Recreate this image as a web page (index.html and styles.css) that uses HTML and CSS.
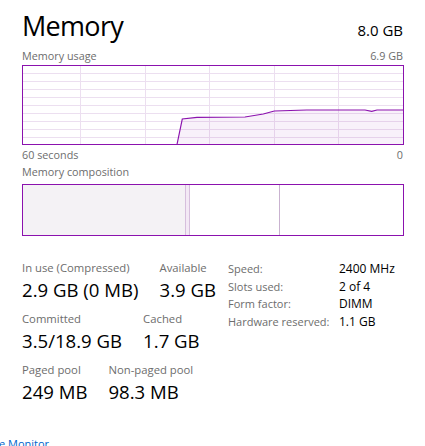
FILE: index.html
```html
<!DOCTYPE html>
<html>
<head>
<meta charset="utf-8">
<link rel="stylesheet" href="styles.css">
</head>
<body>
<div class="page">
  <div class="head">
    <span class="title">Memory</span>
    <span class="total">8.0 GB</span>
  </div>
  <div class="cap cap-usage"><span>Memory usage</span><span>6.9 GB</span></div>
  <svg class="chart" width="382" height="80" viewBox="0 0 382 80">
    <g stroke="#ecdff0" stroke-width="1">
      <line x1="0" y1="8.5" x2="382" y2="8.5"/>
      <line x1="0" y1="16.5" x2="382" y2="16.5"/>
      <line x1="0" y1="24.5" x2="382" y2="24.5"/>
      <line x1="0" y1="32.5" x2="382" y2="32.5"/>
      <line x1="0" y1="40.5" x2="382" y2="40.5"/>
      <line x1="0" y1="48.5" x2="382" y2="48.5"/>
      <line x1="0" y1="56.5" x2="382" y2="56.5"/>
      <line x1="0" y1="64.5" x2="382" y2="64.5"/>
      <line x1="0" y1="72.5" x2="382" y2="72.5"/>
      <line x1="58.5" y1="0" x2="58.5" y2="80"/>
      <line x1="123.5" y1="0" x2="123.5" y2="80"/>
      <line x1="187.5" y1="0" x2="187.5" y2="80"/>
      <line x1="252.5" y1="0" x2="252.5" y2="80"/>
      <line x1="316.5" y1="0" x2="316.5" y2="80"/>
    </g>
    <path d="M155 79.5 L160.3 54 L175 52.3 L223 52 L241.3 49 L252.3 46 L284.7 45 L343 45 L349.7 46.3 L355 45 L381.5 45 L381.5 79.5 Z" fill="#8b12ae" fill-opacity="0.06" stroke="none"/>
    <path d="M155 79.5 L160.3 54 L175 52.3 L223 52 L241.3 49 L252.3 46 L284.7 45 L343 45 L349.7 46.3 L355 45 L381.5 45" fill="none" stroke="#8b12ae" stroke-width="1.2"/>
    <rect x="0.5" y="0.5" width="381" height="79" fill="none" stroke="#8b12ae" stroke-width="1"/>
  </svg>
  <div class="cap cap-axis"><span>60 seconds</span><span>0</span></div>
  <div class="cap cap-comp"><span>Memory composition</span></div>
  <svg class="comp" width="382" height="52" viewBox="0 0 382 52">
    <rect x="0" y="0" width="163.5" height="52" fill="#f4f2f5"/>
    <rect x="163.5" y="0" width="4" height="52" fill="#f3e9f5"/>
    <line x1="163.5" y1="0" x2="163.5" y2="52" stroke="#d6bfdd"/>
    <line x1="167.5" y1="0" x2="167.5" y2="52" stroke="#d6bfdd"/>
    <line x1="257.5" y1="0" x2="257.5" y2="52" stroke="#c9b2d0"/>
    <rect x="0.5" y="0.5" width="381" height="51" fill="none" stroke="#8b12ae" stroke-width="1"/>
  </svg>
  <div class="stats">
    <div class="big">
      <div class="row">
        <div class="stat"><div class="label">In use (Compressed)</div><div class="value">2.9 GB (0 MB)</div></div>
        <div class="stat"><div class="label">Available</div><div class="value">3.9 GB</div></div>
      </div>
      <div class="row">
        <div class="stat"><div class="label">Committed</div><div class="value">3.5/18.9 GB</div></div>
        <div class="stat"><div class="label">Cached</div><div class="value">1.7 GB</div></div>
      </div>
      <div class="row">
        <div class="stat"><div class="label">Paged pool</div><div class="value">249 MB</div></div>
        <div class="stat"><div class="label">Non-paged pool</div><div class="value">98.3 MB</div></div>
      </div>
    </div>
    <div class="small">
      <div class="kv"><span class="k">Speed:</span><span class="v">2400 MHz</span></div>
      <div class="kv"><span class="k">Slots used:</span><span class="v">2 of 4</span></div>
      <div class="kv"><span class="k">Form factor:</span><span class="v">DIMM</span></div>
      <div class="kv"><span class="k">Hardware reserved:</span><span class="v">1.1 GB</span></div>
    </div>
  </div>
  <div class="link">e Monitor</div>
</div>
</body>
</html>
```

FILE: styles.css
```css
html, body {
  margin: 0;
  padding: 0;
  background: #ffffff;
  overflow: hidden;
}
body {
  font-family: "Open Sans", "Noto Sans", "Liberation Sans", sans-serif;
  color: #000;
  width: 425px;
  height: 446px;
}
.page {
  padding: 0 22px 0 22px;
  width: 381px;
  display: flex;
  flex-direction: column;
}
.head {
  display: flex;
  justify-content: space-between;
  align-items: baseline;
  height: 44px;
  padding-top: 8px;
  box-sizing: border-box;
}
.title {
  font-size: 27px;
  line-height: 36px;
  letter-spacing: -0.7px;
}
.total {
  font-size: 15px;
  line-height: 20px;
}
.cap {
  display: flex;
  justify-content: space-between;
  font-size: 10.8px;
  color: #6d6d6d;
  line-height: 16px;
}
.cap-usage {
  height: 21px;
  align-items: flex-end;
  padding-bottom: 1px;
  box-sizing: border-box;
}
.chart, .comp {
  display: block;
}
.cap-axis {
  height: 18px;
  align-items: center;
  padding-top: 1px;
  box-sizing: border-box;
}
.cap-comp {
  height: 21px;
  align-items: flex-start;
  padding-top: 1px;
  box-sizing: border-box;
}
.stats {
  display: flex;
  margin-top: 24px;
}
.big {
  width: 206px;
  display: flex;
  flex-direction: column;
  gap: 7px;
}
.row {
  display: flex;
  gap: 21px;
}
.label {
  font-size: 11.3px;
  color: #6d6d6d;
  line-height: 16px;
}
.value {
  font-size: 18.6px;
  line-height: 28px;
}
.small {
  display: flex;
  flex-direction: column;
}
.kv {
  display: flex;
  align-items: baseline;
  line-height: 17.7px;
}
.k {
  width: 111px;
  font-size: 11px;
  color: #6d6d6d;
}
.v {
  font-size: 12px;
  color: #000;
}
.link {
  margin-top: 30px;
  margin-left: -23px;
  font-size: 11px;
  color: #0066cc;
  line-height: 16px;
}
```
